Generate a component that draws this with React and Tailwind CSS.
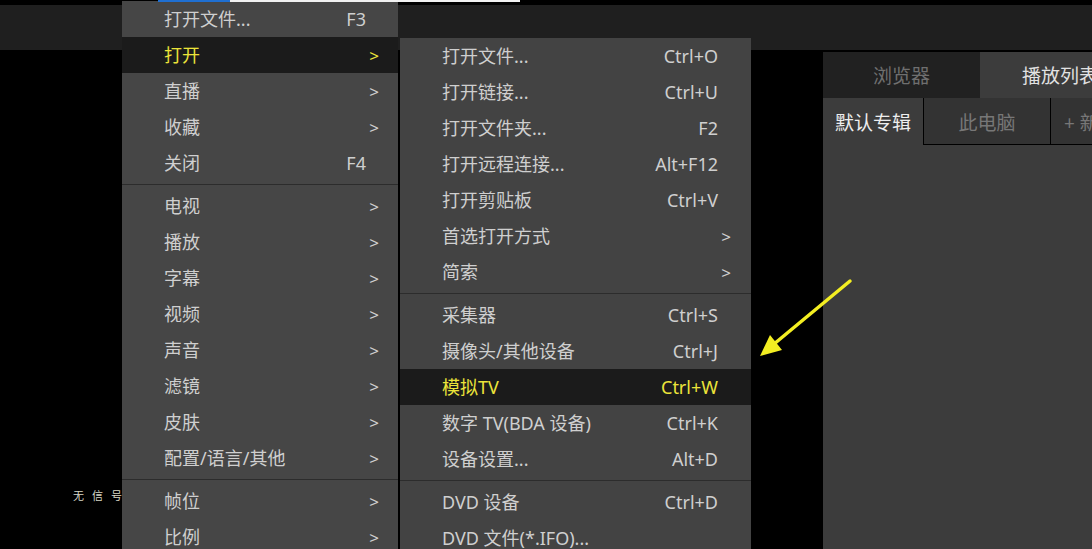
import React from "react";

const FONT = { fontFamily: '"Noto Sans", "Noto Sans CJK SC", sans-serif' };

const mainItems = [
  { l: "打开文件...", s: "F3" },
  { l: "打开", a: true, hl: true },
  { l: "直播", a: true },
  { l: "收藏", a: true },
  { l: "关闭", s: "F4" },
  { sep: true },
  { l: "电视", a: true },
  { l: "播放", a: true },
  { l: "字幕", a: true },
  { l: "视频", a: true },
  { l: "声音", a: true },
  { l: "滤镜", a: true },
  { l: "皮肤", a: true },
  { l: "配置/语言/其他", a: true },
  { sep: true },
  { l: "帧位", a: true },
  { l: "比例", a: true },
];

const subItems = [
  { l: "打开文件...", s: "Ctrl+O" },
  { l: "打开链接...", s: "Ctrl+U" },
  { l: "打开文件夹...", s: "F2" },
  { l: "打开远程连接...", s: "Alt+F12" },
  { l: "打开剪贴板", s: "Ctrl+V" },
  { l: "首选打开方式", a: true },
  { l: "简索", a: true },
  { sep: true },
  { l: "采集器", s: "Ctrl+S" },
  { l: "摄像头/其他设备", s: "Ctrl+J" },
  { l: "模拟TV", s: "Ctrl+W", hl: true },
  { l: "数字 TV(BDA 设备)", s: "Ctrl+K" },
  { l: "设备设置...", s: "Alt+D" },
  { sep: true },
  { l: "DVD 设备", s: "Ctrl+D" },
  { l: "DVD 文件(*.IFO)..." },
];

function MenuRow({ item, pr }) {
  if (item.sep) {
    return (
      <div className="h-[7px] flex flex-col justify-center">
        <div className="h-px bg-[#2c2c2c]" />
      </div>
    );
  }
  const color = item.hl ? "text-[#ece43a]" : "text-[#cfcfcf]";
  return (
    <div
      className={`h-[36px] flex items-center pl-[42px] ${pr} text-[18px] leading-none ${color} ${
        item.hl ? "bg-[#1b1b1b]" : ""
      }`}
    >
      <span className="flex-1 whitespace-nowrap">{item.l}</span>
      {item.s && <span className="mr-[13px] whitespace-nowrap">{item.s}</span>}
      {item.a && <span className="w-[10px] text-[17px] text-right">&gt;</span>}
    </div>
  );
}

export default function App() {
  return (
    <div
      className="relative w-[1092px] h-[549px] bg-black overflow-hidden"
      style={FONT}
    >
      {/* top strip */}
      <div className="relative z-20 h-[5px] flex items-start">
        <div className="ml-[158px] w-[72px] h-[2px] bg-[#1f6fd1]" />
        <div className="w-[290px] h-[2px] bg-[#f2f2f2]" />
      </div>
      <div className="h-[45px] bg-[#1f1f1f]" />

      {/* main area */}
      <div className="flex h-[499px]">
        <div className="w-[823px] shrink-0 pt-[432px] pl-[73px]">
          <span className="text-[11px] leading-[12px] tracking-[8px] text-[#d8d8c8]">
            无信号
          </span>
        </div>
        <div className="flex-1 min-w-0 overflow-hidden flex flex-col pt-[2px]">
          <div className="flex h-[46px]">
            <div className="w-[157px] shrink-0 bg-[#212121] flex items-center justify-center pt-[2px] text-[19px] text-[#6f6f6f]">
              浏览器
            </div>
            <div className="flex-1 bg-[#3c3c3c] flex items-center pl-[42px] pt-[2px] text-[19px] text-[#e2e2e2] whitespace-nowrap">
              播放列表
            </div>
          </div>
          <div className="flex h-[47px] bg-[#3c3c3c]">
            <div className="w-[100px] shrink-0 flex items-center pl-[12px] pt-[4px] text-[19px] text-[#eeeeee] whitespace-nowrap">
              默认专辑
            </div>
            <div className="w-[127px] shrink-0 bg-[#333333] border-l border-b border-black flex items-center justify-center pt-[4px] text-[19px] text-[#777777]">
              此电脑
            </div>
            <div className="flex-1 bg-[#333333] border-l border-b border-black flex items-center pl-[13px] pt-[4px] text-[19px] text-[#777777] whitespace-nowrap">
              + 新建
            </div>
          </div>
          <div className="flex-1 bg-[#3c3c3c]" />
        </div>
      </div>

      {/* main context menu */}
      <div className="absolute z-10 left-[122px] top-[1px] w-[276px] h-[560px] bg-[#464646]">
        {mainItems.map((it, i) => (
          <MenuRow key={i} item={it} pr="pr-[19px]" />
        ))}
      </div>

      {/* submenu */}
      <div className="absolute z-10 left-[400px] top-[38px] w-[351px] h-[520px] bg-[#434343]">
        {subItems.map((it, i) => (
          <MenuRow key={i} item={it} pr="pr-[20px]" />
        ))}
      </div>

      {/* annotation arrow */}
      <svg
        className="absolute z-30 left-[740px] top-[260px]"
        width="130"
        height="110"
        viewBox="740 260 130 110"
      >
        <line
          x1="850"
          y1="281"
          x2="774"
          y2="344"
          stroke="#f3ee22"
          strokeWidth="3.5"
          strokeLinecap="round"
        />
        <polygon points="760,356 770,335 782,350" fill="#f3ee22" />
      </svg>
    </div>
  );
}
